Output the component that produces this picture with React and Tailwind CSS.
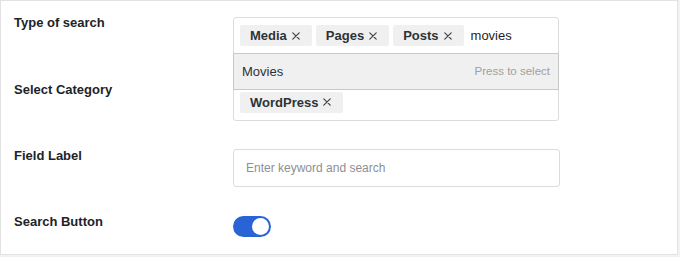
import React from "react";

const font = { fontFamily: '"Liberation Sans", Arial, sans-serif' };

function Cross() {
  return (
    <svg className="ml-[5px]" width="8" height="8" viewBox="0 0 8 8" fill="none">
      <path d="M0.8 0.8L7.2 7.2M7.2 0.8L0.8 7.2" stroke="#3c434a" strokeWidth="1.2" strokeLinecap="round" />
    </svg>
  );
}

function Tag({ label }) {
  return (
    <span className="flex h-[21px] items-center rounded-[2px] bg-[#f0f0f0] pl-[10px] pr-[12px] text-[13px] font-bold leading-[21px] text-[#2c3338]">
      {label}
      <Cross />
    </span>
  );
}

function Row({ label, labelOffset = "-mt-[1px]", children, className = "" }) {
  return (
    <div className={`flex items-start ${className}`}>
      <div className={`w-[232px] shrink-0 pl-[13px] text-[13px] font-bold leading-4 text-[#1d2327] ${labelOffset}`}>
        {label}
      </div>
      {children}
    </div>
  );
}

export default function App() {
  return (
    <div className="h-[257px] w-[680px] bg-[#f2f2f2]" style={font}>
      <div className="flex h-[255px] w-[678px] flex-col border border-[#e2e2e2] bg-white pt-4">
        <Row label="Type of search" labelOffset="-mt-[2px]" className="relative z-10">
          <div className="relative">
            <div className="flex h-[37px] w-[326px] items-center gap-[4px] rounded-t-[3px] border border-[#dcdcde] bg-white px-[6px]">
              <Tag label="Media" />
              <Tag label="Pages" />
              <Tag label="Posts" />
              <span className="ml-[3px] text-[13px] text-[#1e1e1e]">movies</span>
            </div>
            <div className="absolute left-0 top-[36px] flex h-[37px] w-[326px] items-center justify-between border border-[#c8c8c8] bg-[#f0f0f0] pl-[8px] pr-[8px]">
              <span className="text-[13px] text-[#2c3338]">Movies</span>
              <span className="text-[11.5px] text-[#a0a0a0]">Press to select</span>
            </div>
          </div>
        </Row>

        <Row label="Select Category" className="mt-[29px]">
          <div className="flex h-[38px] w-[326px] items-center rounded-[3px] border border-[#dcdcde] bg-white px-[6px]">
            <Tag label="WordPress" />
          </div>
        </Row>

        <Row label="Field Label" className="mt-[28px]">
          <input
            className="h-[38px] w-[327px] rounded-[3px] border border-[#dcdcde] bg-white px-[12px] text-[12px] text-[#1e1e1e] outline-none placeholder:text-[#8c8f94]"
            placeholder="Enter keyword and search"
          />
        </Row>

        <Row label="Search Button" labelOffset="-mt-[2px]" className="mt-[29px]">
          <button className="flex h-[21px] w-[38px] items-center justify-end rounded-full bg-[#2a63d6] p-[2px]">
            <span className="h-[17px] w-[17px] rounded-full bg-white" />
          </button>
        </Row>
      </div>
    </div>
  );
}
